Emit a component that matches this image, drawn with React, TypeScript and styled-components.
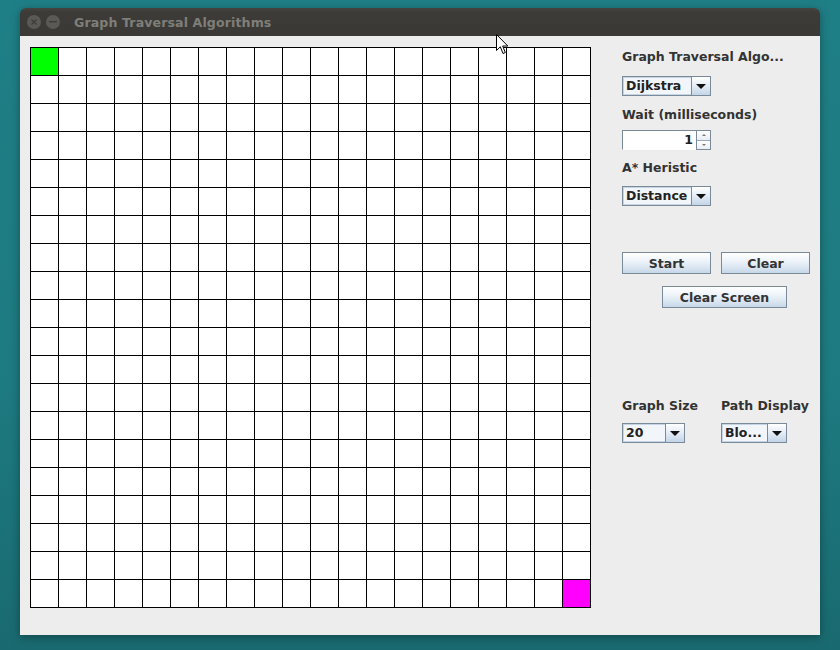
import React from "react";
import styled, { createGlobalStyle } from "styled-components";

const GlobalStyle = createGlobalStyle`
  html, body { margin: 0; padding: 0; }
  body { background: #1c777d; overflow: hidden; }
  * { box-sizing: border-box; }
`;

const Desktop = styled.div`
  position: relative;
  width: 840px;
  height: 650px;
  padding: 8px 20px 0 20px;
  background: linear-gradient(180deg, #1f7f86 0%, #1d7a80 60%, #196a70 100%);
`;

const Window = styled.div`
  width: 800px;
  height: 627px;
  display: flex;
  flex-direction: column;
  border-radius: 6px 6px 0 0;
  overflow: hidden;
  box-shadow: 0 2px 10px rgba(0, 0, 0, 0.35);
`;

const TitleBar = styled.div`
  height: 28px;
  flex: none;
  display: flex;
  align-items: center;
  padding-left: 7px;
  gap: 5px;
  background: linear-gradient(180deg, #45443f 0%, #3c3b37 15%, #3a3935 100%);
`;

const WinButton = styled.div`
  width: 14px;
  height: 14px;
  border-radius: 50%;
  background: #5a5955;
  display: flex;
  align-items: center;
  justify-content: center;
`;

const TitleText = styled.div`
  margin-left: 9px;
  font-family: "DejaVu Sans", "Open Sans", sans-serif;
  font-weight: bold;
  font-size: 12.6px;
  color: #7f7e79;
  letter-spacing: 0.1px;
`;

const Content = styled.div`
  flex: 1;
  display: flex;
  background: #ededed;
  padding: 11px 0 0 10px;
`;

const Board = styled.div`
  width: 561px;
  height: 561px;
  padding: 1px;
  gap: 1px;
  background: #000;
  display: grid;
  grid-template-columns: repeat(20, 27px);
  grid-template-rows: repeat(20, 27px);
`;

const Cell = styled.div<{ $fill: string }>`
  background: ${(p) => p.$fill};
`;

const Side = styled.div`
  margin-left: 31px;
  display: flex;
  flex-direction: column;
  align-items: flex-start;
`;

const Label = styled.div<{ $mt: number }>`
  margin-top: ${(p) => p.$mt}px;
  height: 16px;
  line-height: 16px;
  font-family: "DejaVu Sans", sans-serif;
  font-weight: bold;
  font-size: 12.5px;
  color: #333333;
  white-space: nowrap;
`;

const ComboBox = styled.div<{ $w: number; $mt: number }>`
  margin-top: ${(p) => p.$mt}px;
  width: ${(p) => p.$w}px;
  height: 20px;
  display: flex;
  border: 1px solid #7a8a99;
  background: #eef2f7;
`;

const ComboText = styled.div`
  flex: 1;
  border: 1px solid #c6d5e6;
  border-right: none;
  padding-left: 2px;
  line-height: 16px;
  font-family: "DejaVu Sans", sans-serif;
  font-weight: bold;
  font-size: 12.5px;
  color: #222222;
  white-space: nowrap;
  overflow: hidden;
  background: #f2f5f9;
`;

const ComboArrow = styled.div`
  width: 19px;
  flex: none;
  border-left: 1px solid #7a8a99;
  background: linear-gradient(180deg, #ffffff 0%, #e6eef7 45%, #c3d5e8 100%);
  display: flex;
  align-items: center;
  justify-content: center;
`;

const Triangle = styled.div`
  width: 0;
  height: 0;
  border-left: 5px solid transparent;
  border-right: 5px solid transparent;
  border-top: 5px solid #111;
  margin-top: 1px;
`;

const Spinner = styled.div`
  margin-top: 7px;
  width: 89px;
  height: 20px;
  display: flex;
`;

const SpinField = styled.div`
  flex: 1;
  background: #ffffff;
  border-top: 1px solid #7a8a99;
  border-left: 1px solid #7a8a99;
  border-bottom: 1px solid #ffffff;
  text-align: right;
  padding-right: 3px;
  line-height: 17px;
  font-family: "DejaVu Sans", sans-serif;
  font-weight: bold;
  font-size: 12.5px;
  color: #222;
`;

const SpinButtons = styled.div`
  width: 15px;
  display: flex;
  flex-direction: column;
  border: 1px solid #7a8a99;
`;

const SpinHalf = styled.div<{ $down?: boolean }>`
  flex: 1;
  display: flex;
  align-items: center;
  justify-content: center;
  background: linear-gradient(180deg, #ffffff 0%, #e8eef5 100%);
  border-top: ${(p) => (p.$down ? "1px solid #9aa8b6" : "none")};
`;

const SmallTri = styled.div<{ $up?: boolean }>`
  width: 0;
  height: 0;
  border-left: 2px solid transparent;
  border-right: 2px solid transparent;
  ${(p) => (p.$up ? "border-bottom: 2px solid #777;" : "border-top: 2px solid #777;")}
`;

const ButtonRow = styled.div`
  margin-top: 46px;
  display: flex;
  gap: 10px;
`;

const Button = styled.div<{ $w: number; $ml?: number; $mt?: number }>`
  width: ${(p) => p.$w}px;
  height: 22px;
  margin-left: ${(p) => p.$ml ?? 0}px;
  margin-top: ${(p) => p.$mt ?? 0}px;
  border: 1px solid #7a8a99;
  background: linear-gradient(180deg, #ffffff 0%, #f0f5fa 35%, #dce7f2 70%, #c6d7e8 100%);
  display: flex;
  align-items: center;
  justify-content: center;
  font-family: "DejaVu Sans", sans-serif;
  font-weight: bold;
  font-size: 12.5px;
  color: #333;
`;

const BottomGrid = styled.div`
  margin-top: 90px;
  display: grid;
  grid-template-columns: 99px auto;
  align-items: start;
`;

const Column = styled.div`
  display: flex;
  flex-direction: column;
`;

const Cursor = styled.svg`
  position: absolute;
  left: 496px;
  top: 34px;
`;

const N = 20;

function Combo({ w, mt, text }: { w: number; mt: number; text: string }) {
  return (
    <ComboBox $w={w} $mt={mt}>
      <ComboText>{text}</ComboText>
      <ComboArrow>
        <Triangle />
      </ComboArrow>
    </ComboBox>
  );
}

export default function App() {
  const cells = [];
  for (let r = 0; r < N; r++) {
    for (let c = 0; c < N; c++) {
      let fill = "#ffffff";
      if (r === 0 && c === 0) fill = "#00ff00";
      if (r === N - 1 && c === N - 1) fill = "#ff00ff";
      cells.push(<Cell key={`${r}-${c}`} $fill={fill} />);
    }
  }
  return (
    <>
      <GlobalStyle />
      <Desktop>
        <Window>
          <TitleBar>
            <WinButton>
              <svg width="6" height="6" viewBox="0 0 6 6">
                <path d="M0.5 0.5 L5.5 5.5 M5.5 0.5 L0.5 5.5" stroke="#3d3c38" strokeWidth="1.2" />
              </svg>
            </WinButton>
            <WinButton>
              <svg width="8" height="2" viewBox="0 0 8 2">
                <rect x="0" y="0" width="8" height="1.4" fill="#3d3c38" />
              </svg>
            </WinButton>
            <TitleText>Graph Traversal Algorithms</TitleText>
          </TitleBar>
          <Content>
            <Board>{cells}</Board>
            <Side>
              <Label $mt={2}>Graph Traversal Algo...</Label>
              <Combo w={89} mt={11} text="Dijkstra" />
              <Label $mt={11}>Wait (milliseconds)</Label>
              <Spinner>
                <SpinField>1</SpinField>
                <SpinButtons>
                  <SpinHalf>
                    <SmallTri $up />
                  </SpinHalf>
                  <SpinHalf $down>
                    <SmallTri />
                  </SpinHalf>
                </SpinButtons>
              </Spinner>
              <Label $mt={10}>A* Heristic</Label>
              <Combo w={89} mt={10} text="Distance" />
              <ButtonRow>
                <Button $w={89}>Start</Button>
                <Button $w={89}>Clear</Button>
              </ButtonRow>
              <Button $w={125} $ml={40} $mt={12}>
                Clear Screen
              </Button>
              <BottomGrid>
                <Column>
                  <Label $mt={0}>Graph Size</Label>
                  <Combo w={63} mt={9} text="20" />
                </Column>
                <Column>
                  <Label $mt={0}>Path Display</Label>
                  <Combo w={66} mt={9} text="Blo..." />
                </Column>
              </BottomGrid>
            </Side>
          </Content>
        </Window>
        <Cursor width="13" height="21" viewBox="0 0 13 21">
          <path d="M0.5 0.5 L0.5 16.5 L4.3 12.8 L7 19.5 L9.3 18.5 L6.7 12 L11.8 12 Z" fill="#ffffff" stroke="#000000" strokeWidth="1" />
        </Cursor>
      </Desktop>
    </>
  );
}
